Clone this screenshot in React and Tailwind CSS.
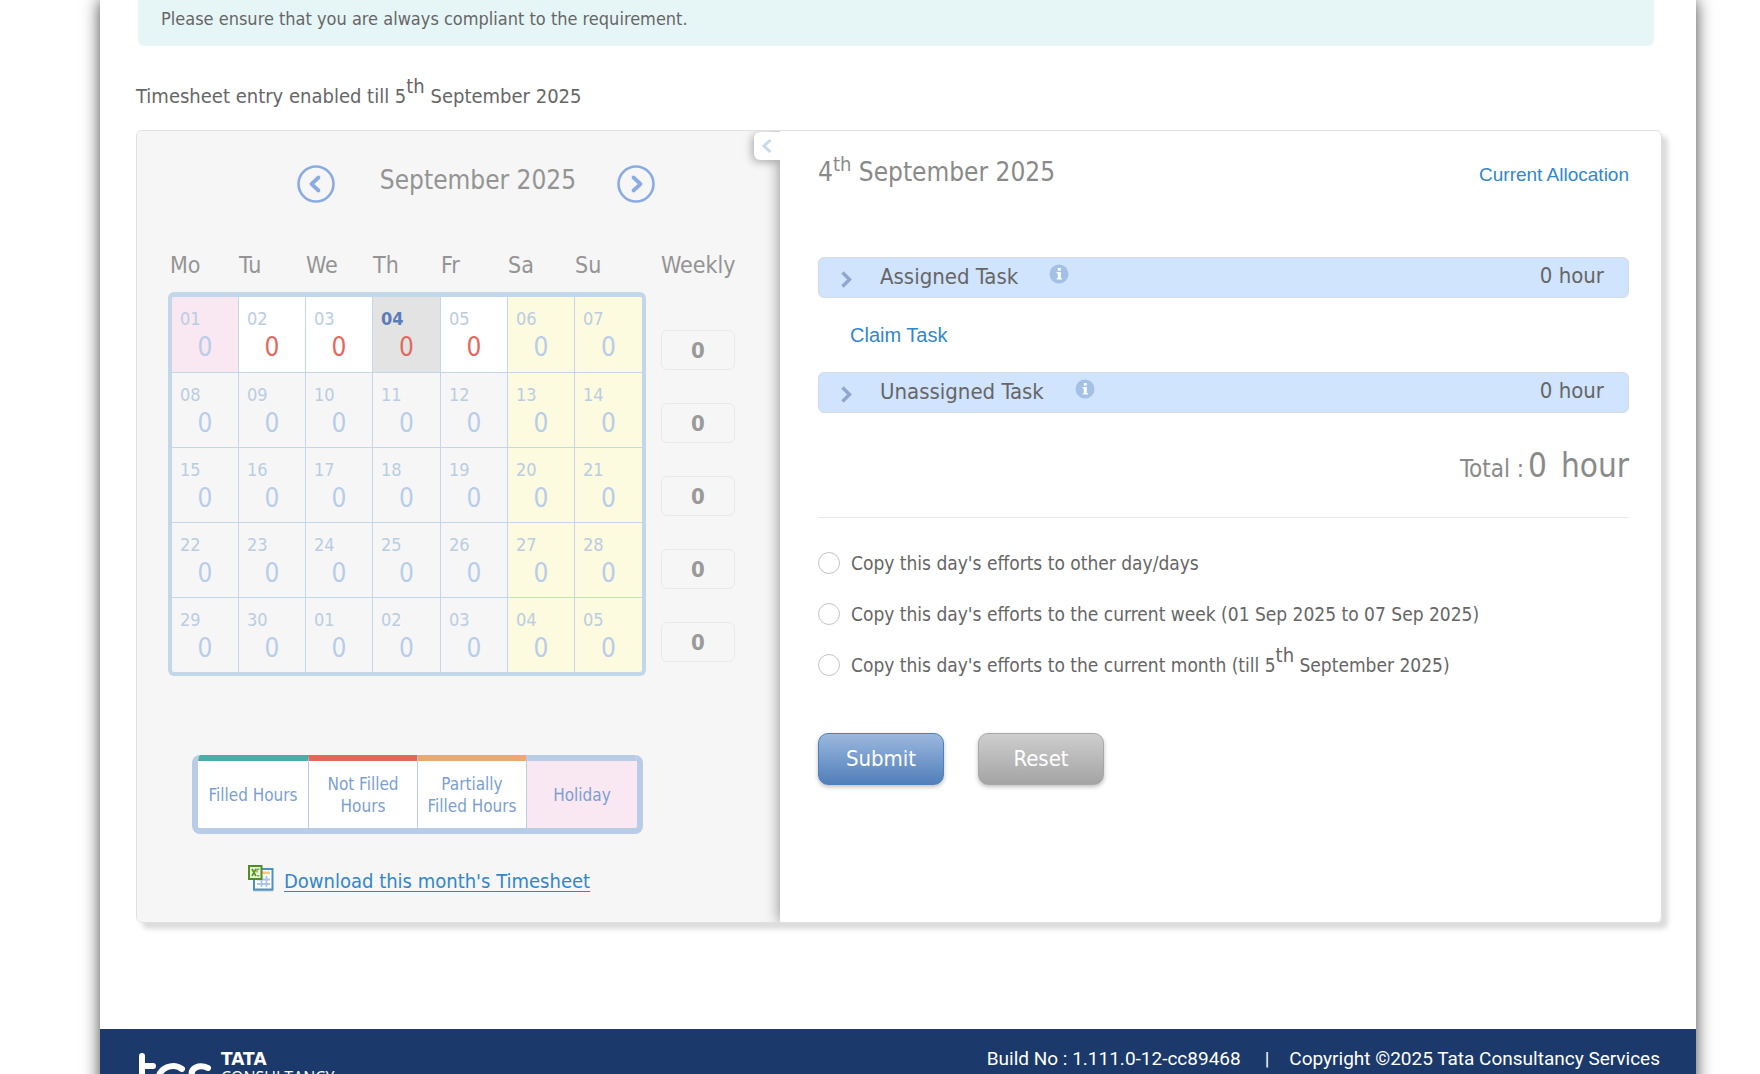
import React from "react";

const WEEKDAYS = ["Mo", "Tu", "We", "Th", "Fr", "Sa", "Su"];

const WEEKS = [
  ["01", "02", "03", "04", "05", "06", "07"],
  ["08", "09", "10", "11", "12", "13", "14"],
  ["15", "16", "17", "18", "19", "20", "21"],
  ["22", "23", "24", "25", "26", "27", "28"],
  ["29", "30", "01", "02", "03", "04", "05"],
];

const LEGEND = [
  { label: "Filled Hours", style: "w-[110px] border-t-[#4bada8] bg-white" },
  { label: "Not Filled Hours", style: "w-[109px] border-t-[#e2695a] border-l border-l-[#b8cce6] bg-white" },
  { label: "Partially Filled Hours", style: "w-[109px] border-t-[#f0a868] border-l border-l-[#b8cce6] bg-white" },
  { label: "Holiday", style: "w-[111px] border-t-[#b8cce6] border-l border-l-[#b8cce6] bg-[#f9e7f2]" },
];

function cellBackground(week, day) {
  if (day > 4) return "bg-[#fcfadf]";
  if (week === 0 && day === 0) return "bg-[#f9e7f2]";
  if (week === 0 && day === 3) return "bg-[#e3e3e3]";
  if (week === 0) return "bg-white";
  return "";
}

function DayCell({ date, week, day }) {
  const today = week === 0 && day === 3;
  const open = week === 0 && day > 0 && day < 5;
  const edges = [
    week === 0 ? "border-t-[5px]" : "",
    week === 4 ? "border-b-[4px]" : "border-b",
    day === 0 ? "border-l-[4px]" : "",
    day === 6 ? "border-r-[4px]" : "border-r",
    week === 0 && day === 0 ? "rounded-tl-md" : "",
    week === 0 && day === 6 ? "rounded-tr-md" : "",
    week === 4 && day === 0 ? "rounded-bl-md" : "",
    week === 4 && day === 6 ? "rounded-br-md" : "",
  ].join(" ");
  return (
    <td className={`border-[#c3d7ea] p-0 ${edges} ${cellBackground(week, day)}`}>
      <div className={`flex flex-col pt-3 ${week === 0 ? "h-[75px]" : "h-[74px]"}`}>
        <span className={`pl-2 text-[18px] leading-5 ${today ? "font-bold text-[#5b7cb8]" : "text-[#bacde2]"}`}>{date}</span>
        <span className={`mt-[3px] text-center text-[26px] leading-[30px] ${open ? "text-[#e2695c]" : "text-[#b7cdea]"}`}>0</span>
      </div>
    </td>
  );
}

function RoundArrow({ label, points }) {
  return (
    <button type="button" aria-label={label} className="size-[38px] shrink-0">
      <svg viewBox="0 0 38 38" className="size-full" fill="none" stroke="#8aace2">
        <circle cx="19" cy="19" r="17.5" strokeWidth="2.6" />
        <polyline points={points} strokeWidth="3.8" strokeLinecap="round" strokeLinejoin="round" />
      </svg>
    </button>
  );
}

function SpreadsheetIcon() {
  return (
    <svg viewBox="0 0 26 27" className="h-[27px] w-[26px] shrink-0" fill="none">
      <rect x="5" y="24.5" width="20" height="2" fill="#c4c6c8" />
      <rect x="6" y="4" width="18.5" height="20.5" fill="#fff" stroke="#4b90c4" strokeWidth="2" />
      <rect x="14" y="6.5" width="8" height="2.6" fill="#f4c77a" />
      <path d="M9 14.5h13M9 19h13M13.5 11v11M18.5 11v11" stroke="#a9c5e4" strokeWidth="1.8" />
      <rect x="1" y="1" width="12.5" height="13" fill="#eaf5da" stroke="#4f8f22" strokeWidth="2" />
      <path d="M4 4l4 7M8 4l-4 7" stroke="#5c9a2c" strokeWidth="1.8" />
      <path d="M11.3 4.3H9v3.2M11.3 10.8H9" stroke="#7bb04e" strokeWidth="1.4" />
    </svg>
  );
}

function TaskBar({ title }) {
  return (
    <div className="flex h-[41px] items-center rounded-md border border-[#d6dbe2] bg-[#d0e4fd] pr-6 text-[22px] text-[#666]">
      <button type="button" className="flex items-center pl-[22px]">
        <svg viewBox="0 0 11 17" className="mt-1 h-[17px] w-[11px]" fill="none" stroke="#8fa6cf" strokeWidth="3.4">
          <path d="M1.5 1.5 8.5 8.5 1.5 15.5" />
        </svg>
        <span className="pl-7 leading-7">{title}</span>
      </button>
      <svg viewBox="0 0 20 20" className="mb-1.5 ml-[31px] size-5" aria-hidden="true">
        <circle cx="10" cy="10" r="9.5" fill="#a3c1e5" />
        <rect x="8.8" y="4" width="3" height="2.6" fill="#fff" />
        <path d="M7.6 8h4.2v6h1v1.4H7.8V14h1V9.4H7.6z" fill="#fff" />
      </svg>
      <span className="ml-auto pb-0.5 leading-7">0 hour</span>
    </div>
  );
}

function CopyOption({ id, children }) {
  return (
    <div className="flex items-center gap-[11px]">
      <input
        type="radio"
        id={id}
        name="copy-efforts"
        className="size-[22px] shrink-0 appearance-none rounded-full border border-[#c4c4c4] bg-white checked:border-[7px] checked:border-[#5a86c2]"
      />
      <label htmlFor={id} className="text-[19px] leading-6 text-[#666]">
        {children}
      </label>
    </div>
  );
}

function CalendarPanel() {
  return (
    <section className="w-[643px] shrink-0 bg-[#f6f6f6] pb-7 pt-[34px]">
      <div className="ml-40 flex w-[358px] items-center justify-between">
        <RoundArrow label="Previous month" points="21.5,12.5 14.5,19 21.5,25.5" />
        <h2 className="pb-2 pl-1 text-[26px] leading-[30px] text-[#949494]">September 2025</h2>
        <RoundArrow label="Next month" points="16.5,12.5 23.5,19 16.5,25.5" />
      </div>

      <div className="ml-[31px] mt-12 flex gap-[15px]">
        <table className="w-[478px] table-fixed border-separate border-spacing-0">
          <colgroup>
            <col className="w-[71px]" />
            <col className="w-[67px]" />
            <col className="w-[67px]" />
            <col className="w-[68px]" />
            <col className="w-[67px]" />
            <col className="w-[67px]" />
            <col className="w-[71px]" />
          </colgroup>
          <thead>
            <tr>
              {WEEKDAYS.map((day) => (
                <th key={day} scope="col" className="h-[41px] p-0 text-left align-top text-[23px] font-normal leading-7 text-[#949494] first:pl-0.5">
                  {day}
                </th>
              ))}
            </tr>
          </thead>
          <tbody>
            {WEEKS.map((dates, week) => (
              <tr key={week}>
                {dates.map((date, day) => (
                  <DayCell key={day} date={date} week={week} day={day} />
                ))}
              </tr>
            ))}
          </tbody>
        </table>
        <div className="w-[74px]">
          <h3 className="text-[23px] leading-7 text-[#949494]">Weekly</h3>
          <div className="mt-[51px] flex flex-col gap-[33px]">
            {WEEKS.map((_, week) => (
              <div key={week} className="flex h-10 items-center justify-center rounded-md border border-[#e9e9e9] text-[22px] font-bold text-[#9a9a9a]">
                0
              </div>
            ))}
          </div>
        </div>
      </div>

      <div className="ml-[55px] mt-[79px] flex h-[79px] w-[451px] overflow-hidden rounded-lg border-x-[6px] border-b-[6px] border-[#b8cce6]">
        {LEGEND.map(({ label, style }) => (
          <div key={label} className={`flex items-center justify-center border-t-[6px] px-2 text-center text-[17px] leading-[22px] text-[#7c9fd0] ${style}`}>
            {label}
          </div>
        ))}
      </div>

      <div className="ml-[111px] mt-[31px] flex gap-2.5">
        <SpreadsheetIcon />
        <a href="#download" className="pt-[3px] text-[20px] leading-[26px] text-[#3287cb] underline decoration-1 underline-offset-[3px]">
          Download this month's Timesheet
        </a>
      </div>
    </section>
  );
}

function DayPanel() {
  return (
    <section className="relative min-w-0 flex-1 bg-white pl-[38px] pr-8 pt-[25px] shadow-[0_0_14px_rgba(0,0,0,0.45)]">
      <button
        type="button"
        aria-label="Collapse calendar"
        className="absolute right-full top-px flex h-7 w-[26px] items-center justify-center rounded-l-md bg-white shadow-[-2px_2px_8px_rgba(0,0,0,0.3)] [clip-path:inset(-20px_0_-20px_-20px)]"
      >
        <svg viewBox="0 0 10 14" className="h-3.5 w-2.5" fill="none" stroke="#c9daec" strokeWidth="3">
          <path d="M8.5 1 2 7l6.5 6" />
        </svg>
      </button>

      <header className="flex items-baseline justify-between">
        <h2 className="text-[26px] leading-8 text-[#8a8a8a]">
          4<sup className="text-[20px]">th</sup> September 2025
        </h2>
        <a href="#allocation" className="font-['Liberation_Sans',sans-serif] text-[19px] text-[#3287cb]">
          Current Allocation
        </a>
      </header>

      <div className="mt-[67px]">
        <TaskBar title="Assigned Task" />
      </div>
      <a href="#claim" className="ml-8 mt-[23px] block w-fit font-['Liberation_Sans',sans-serif] text-[20px] leading-7 text-[#3287cb]">
        Claim Task
      </a>
      <div className="mt-[23px]">
        <TaskBar title="Unassigned Task" />
      </div>

      <p className="mt-[33px] flex items-baseline justify-end text-[#8a8a8a]">
        <span className="text-[24px]">Total :</span>
        <span className="ml-1 text-[33px] leading-10">0</span>
        <span className="ml-3.5 text-[33px] leading-10">hour</span>
      </p>
      <hr className="mt-[30px] border-[#e8e8e8]" />

      <div className="mt-[33px] flex flex-col gap-[27px]">
        <CopyOption id="copy-days">Copy this day's efforts to other day/days</CopyOption>
        <CopyOption id="copy-week">Copy this day's efforts to the current week (01 Sep 2025 to 07 Sep 2025)</CopyOption>
        <CopyOption id="copy-month">
          Copy this day's efforts to the current month (till 5<sup className="text-[20px]">th</sup> September 2025)
        </CopyOption>
      </div>

      <div className="mt-14 flex gap-[34px] text-[22px] text-white [text-shadow:0_2px_2px_rgba(0,0,0,0.3)]">
        <button type="button" className="h-[52px] w-[126px] rounded-[10px] border border-[#4d80bf] bg-linear-to-b from-[#9bb8de] to-[#507fb9] shadow-[0_2px_4px_rgba(0,0,0,0.25)]">
          Submit
        </button>
        <button type="button" className="h-[52px] w-[126px] rounded-[10px] border border-[#a8a8a8] bg-linear-to-b from-[#cecece] to-[#a4a4a4] shadow-[0_2px_4px_rgba(0,0,0,0.25)]">
          Reset
        </button>
      </div>
    </section>
  );
}

function Footer() {
  return (
    <footer className="flex items-start bg-[#1b396a] pl-[38px] pr-9 text-white">
      <svg viewBox="0 0 75 62" className="mt-6 h-[62px] w-[75px] shrink-0" fill="none" stroke="#fff" strokeWidth="6" strokeLinecap="round" aria-label="tcs">
        <path d="M4 3v31q0 11 13 9M4 13h11" />
        <path d="M44 16C36 10 20 13 20 29c0 15 17 18 26 10" />
        <path d="M70 15c-9-4-18 0-16 8 2 6 12 6 12 13s-10 9-18 5" />
      </svg>
      <div className="ml-2 mt-[22px]">
        <p className="font-['DejaVu_Sans',sans-serif] text-[17px] font-black leading-4">TATA</p>
        <p className="font-['Open_Sans',sans-serif] text-[16px] leading-5">CONSULTANCY</p>
      </div>
      <p className="ml-auto mt-[18px] flex font-['Roboto',sans-serif] text-[19px] leading-6">
        <span>Build No : 1.111.0-12-cc89468</span>
        <span className="ml-6 mr-5">|</span>
        <span>Copyright ©2025 Tata Consultancy Services</span>
      </p>
    </footer>
  );
}

export default function App() {
  return (
    <div className="h-screen overflow-hidden bg-white font-['DejaVu_Sans_Condensed','DejaVu_Sans',sans-serif]">
      <div className="ml-[100px] mr-16 min-h-full bg-white shadow-[0_0_16px_#444]">
        <main className="pb-[106px] pl-9 pr-[34px]">
          <p className="ml-0.5 mr-2 rounded-b-md bg-[#e6f6f7] px-[23px] pb-[15px] pt-[7px] text-[18px] leading-6 text-[#666]">
            Please ensure that you are always compliant to the requirement.
          </p>
          <p className="mt-[37px] text-[20px] leading-[26px] text-[#666]">
            Timesheet entry enabled till 5<sup className="text-[20px]">th</sup> September 2025
          </p>
          <div className="mt-[21px] rounded-md shadow-[6px_6px_5px_#dcdcdc]">
            <div className="flex overflow-hidden rounded-md border border-[#e0e0e0]">
              <CalendarPanel />
              <DayPanel />
            </div>
          </div>
        </main>
        <Footer />
      </div>
    </div>
  );
}
